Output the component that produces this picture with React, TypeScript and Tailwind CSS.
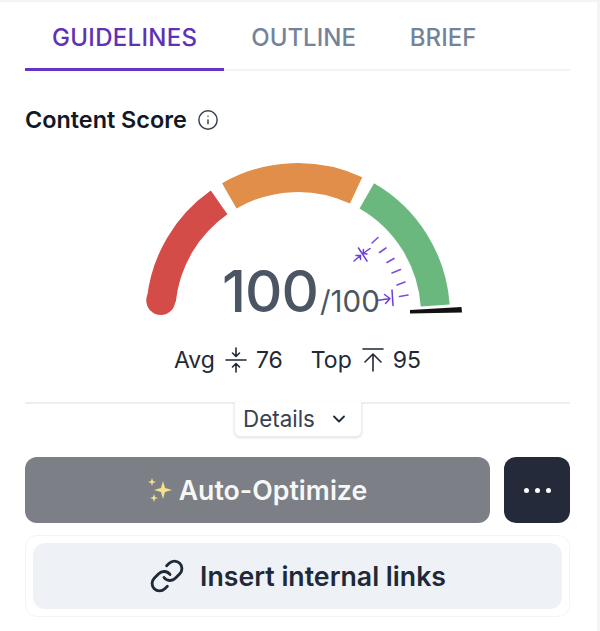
import React from 'react';
import { Info, ChevronDown, Link } from 'lucide-react';

const CX = 298;
const CY = 315;
const R = 137.5;

const polar = (deg: number, r = R) => {
  const a = (deg * Math.PI) / 180;
  return `${(CX + r * Math.cos(a)).toFixed(1)} ${(CY - r * Math.sin(a)).toFixed(1)}`;
};

const arc = (from: number, to: number) => `M${polar(from)} A${R} ${R} 0 0 1 ${polar(to)}`;

const Gauge = () => (
  <svg width="340" height="180" viewBox="130 150 340 180" fill="none" className="block">
    <path d={arc(174, 125)} stroke="#d44c47" strokeWidth="29" />
    <circle cx="160.8" cy="300.6" r="14.500" fill="#d44c47" />
    <path d={arc(120, 65)} stroke="#e08e4a" strokeWidth="29" />
    <path d={arc(60, 4)} stroke="#6bb87f" strokeWidth="29" />
    {/* ticks */}
    <g stroke="#7c4fd8" strokeWidth="1.6" strokeLinecap="round">
      <path d="M372 243L378 237.500" />
      <path d="M379.500 252.500L386 248" />
      <path d="M387 262.500L394 258.500" />
      <path d="M392 273L400.500 269.500" />
      <path d="M397 285L405 282" />
      <path d="M399.500 296.500L408 295" />
    </g>
    {/* avg and top markers */}
    <g stroke="#6d3fd6" strokeWidth="1.5" strokeLinecap="round" strokeLinejoin="round">
      <path d="M358.500 248L367 261" />
      <path d="M370 248.500L363 253.500M363.500 249.500L363 253.500L367 254" />
      <path d="M354 261L360.500 255.500M356 255.500L360.500 255.500L360.500 259.500" />
      <path d="M392 290L393 305.500" />
      <path d="M377 300.500L390 298.500M384.500 294.500L390 298.500L385.500 303.500" />
    </g>
    <path d="M410 310L461.500 307L462 312.500L410 313.500Z" fill="#111111" />
  </svg>
);

const Sparkles = () => (
  <svg width="26" height="26" viewBox="0 0 26 26" fill="#f7e08a" className="shrink-0">
    <path d="M15 4L17 11L24 13L17 15L15 22L13 15L6 13L13 11Z" />
    <path d="M4 1L5 4L8 5L5 6L4 9L3 6L0 5L3 4Z" />
    <path d="M6 17L7 20L10 21L7 22L6 25L5 22L2 21L5 20Z" />
  </svg>
);

const AvgIcon = () => (
  <svg width="22" height="26" viewBox="0 0 22 26" fill="none" stroke="#1f2937" strokeWidth="1.6" strokeLinecap="round" strokeLinejoin="round">
    <path d="M1 13H21" />
    <path d="M11 1V9M7.500 6L11 9.500L14.500 6" />
    <path d="M11 25V17M7.500 20L11 16.500L14.500 20" />
  </svg>
);

const TopIcon = () => (
  <svg width="22" height="26" viewBox="0 0 22 26" fill="none" stroke="#1f2937" strokeWidth="1.6" strokeLinecap="round" strokeLinejoin="round">
    <path d="M1 2H21" />
    <path d="M11 24V7M3 15L11 7L19 15" />
  </svg>
);

export default function App() {
  return (
    <div className="h-[631px] w-[600px] overflow-hidden border-t-2 border-r-[3px] border-[#f4f4f5] bg-white font-['Inter',sans-serif]">
      <div className="w-[570px] pl-[25px]">
        <div className="flex h-[69px] border-b-2 border-[#f3f4f6]">
          <div className="-mb-[2px] border-b-[3px] border-[#6534c0] px-[27px] pt-[21px] text-[24px] leading-[30px] font-medium tracking-[0.3px] text-[#5f32b5]">GUIDELINES</div>
          <div className="px-[27px] pt-[21px] text-[24px] leading-[30px] font-medium text-[#75839a]">OUTLINE</div>
          <div className="px-[27px] pt-[21px] text-[24px] leading-[30px] font-medium text-[#75839a]">BRIEF</div>
        </div>

        <div className="mt-[34px] flex items-center gap-[10px] text-[23.400px] leading-[30px] font-semibold text-[#111827]">
          Content Score
          <Info className="h-[22px] w-[22px] text-[#374151]" strokeWidth={1.6} />
        </div>

        <div className="relative mt-[15px] ml-[105px] h-[180px] w-[340px]">
          <Gauge />
          <div className="absolute top-[99px] left-[92px] flex items-baseline whitespace-nowrap text-[#4b5563]">
            <span className="text-[58px] leading-[84px] font-medium tracking-[-1px]">100</span>
            <span className="ml-[2px] text-[29.500px] text-[#4b5563]">/100</span>
          </div>
        </div>

        <div className="mt-[14px] flex h-[32px] items-center justify-center text-[23px] text-[#1f2937]">
          <span>Avg</span>
          <span className="mr-[9px] ml-[10px]"><AvgIcon /></span>
          <span>76</span>
          <span className="ml-[28px]">Top</span>
          <span className="mr-[9px] ml-[10px]"><TopIcon /></span>
          <span>95</span>
        </div>

        <div className="mt-[26px] flex justify-center border-t-2 border-[#eceef1]">
          <div className="-mt-[2px] ml-[1px] flex h-[35px] w-[128px] items-center justify-center gap-[15px] rounded-b-[6px] border-x border-b border-[#eceef1] bg-white text-[22.400px] text-[#374151] shadow-sm">
            Details
            <ChevronDown className="-ml-[1px] mr-[4px] h-[20px] w-[20px] text-[#1f2937]" strokeWidth={2.2} />
          </div>
        </div>

        <div className="mt-[20px] flex gap-[14px]">
          <div className="flex h-[66px] flex-1 items-center justify-center gap-[5px] rounded-[12px] bg-[#7d7f87] text-[26.700px] font-semibold text-white/95">
            <Sparkles />
            Auto-Optimize
          </div>
          <div className="flex h-[66px] w-[66px] items-center justify-center gap-[6px] rounded-[12px] bg-[#252a3a]">
            <span className="h-[5px] w-[5px] rounded-full bg-white" />
            <span className="h-[5px] w-[5px] rounded-full bg-white" />
            <span className="h-[5px] w-[5px] rounded-full bg-white" />
          </div>
        </div>

        <div className="mt-[12px] rounded-[12px] border border-[#f3f4f6] p-[7px]">
          <div className="flex h-[66px] items-center justify-center gap-[15px] rounded-[12px] bg-[#eef2f6] text-[26.700px] font-semibold text-[#1f2937]">
            <Link className="h-[36px] w-[36px] text-[#1f2937]" strokeWidth={1.9} />
            Insert internal links
          </div>
        </div>
      </div>
    </div>
  );
}
